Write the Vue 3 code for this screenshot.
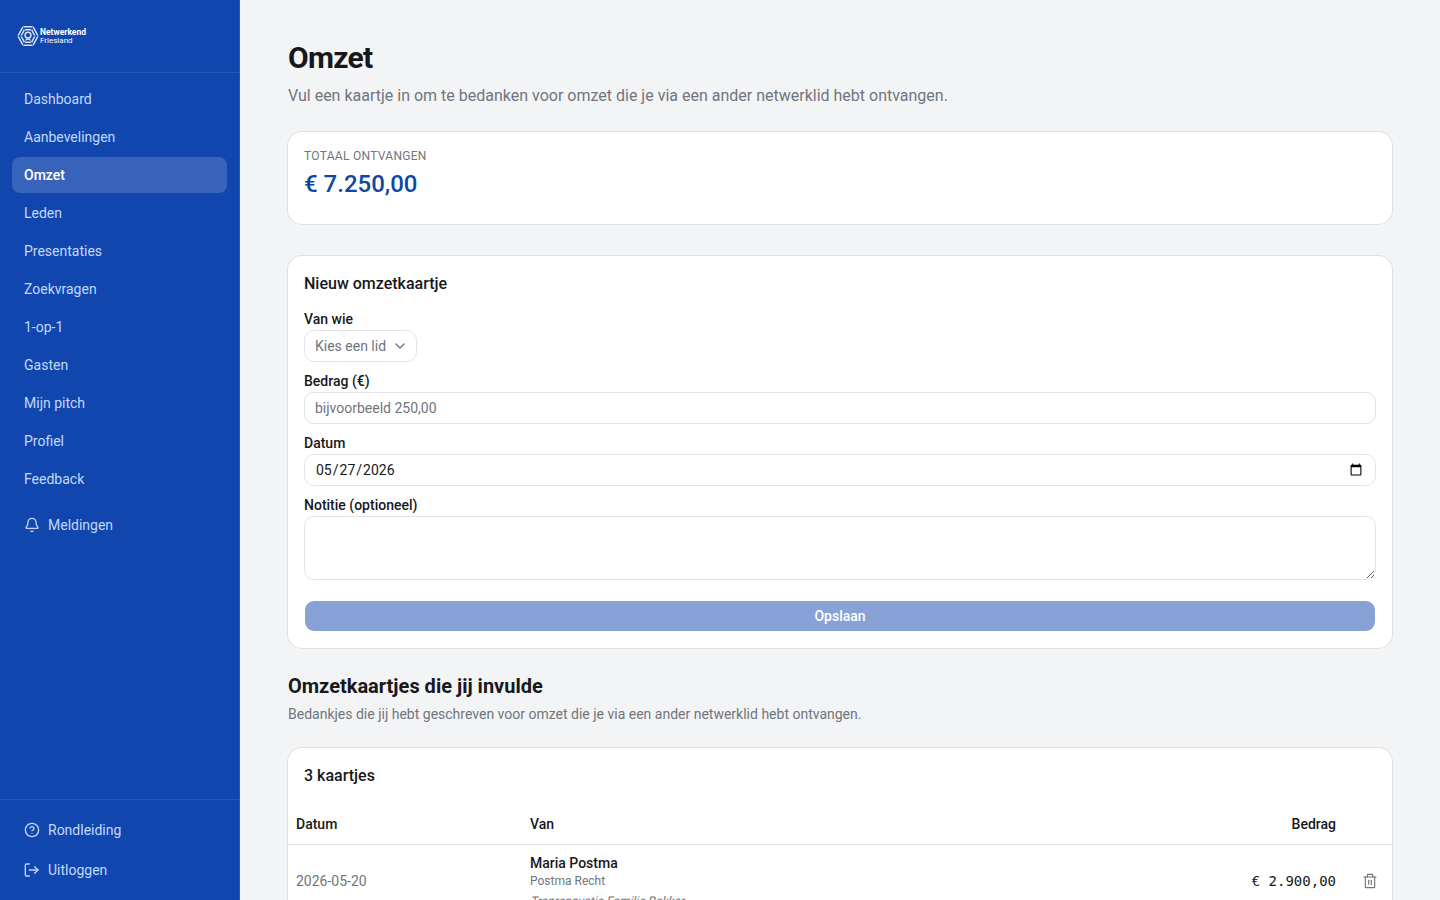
<template>
  <div class="layout">
    <aside class="sidebar">
      <div class="brand">
        <svg class="brand-mark" viewBox="0 0 22 22" fill="none" stroke="currentColor">
          <path d="M6 1.8h10l5 9.2-5 9.2H6L1 11z" stroke-width="1.5" />
          <path d="M7.4 4.8h7.2l3.3 6.2-3.3 6.2H7.4L4.1 11z" stroke-width="1.4" />
          <path class="brand-gap" d="M5.4.8l2.5 4.6M16.6.8l-2.5 4.6M22 11h-5M16.6 21.2l-2.5-4.6M5.4 21.2l2.5-4.6M0 11h5" />
          <circle cx="11" cy="10.2" r="2.9" stroke-width="1.5" />
          <path d="M8.4 15.4c1.5-1.7 3.7-1.7 5.2 0" stroke-width="1.4" />
        </svg>
        <div class="brand-name">
          <strong>Netwerkend</strong>
          <span>Friesland</span>
        </div>
      </div>

      <nav class="nav">
        <a
          v-for="item in navItems"
          :key="item"
          class="nav-item"
          :class="{ active: item === current }"
          @click="current = item"
        >{{ item }}</a>
        <a class="nav-item with-icon notifications">
          <svg class="icon" viewBox="0 0 24 24">
            <path d="M10.268 21a2 2 0 0 0 3.464 0" />
            <path d="M3.262 15.326A1 1 0 0 0 4 17h16a1 1 0 0 0 .74-1.673C19.41 13.956 18 12.499 18 8A6 6 0 0 0 6 8c0 4.499-1.411 5.956-2.738 7.326" />
          </svg>
          Meldingen
        </a>
      </nav>

      <div class="sidebar-footer">
        <a class="nav-item with-icon">
          <svg class="icon" viewBox="0 0 24 24">
            <circle cx="12" cy="12" r="10" />
            <path d="M9.09 9a3 3 0 0 1 5.83 1c0 2-3 3-3 3" />
            <path d="M12 17h.01" />
          </svg>
          Rondleiding
        </a>
        <a class="nav-item with-icon">
          <svg class="icon" viewBox="0 0 24 24">
            <path d="M8 3H4a2 2 0 0 0-2 2v14a2 2 0 0 0 2 2h4" />
            <path d="M8 12h13" />
            <path d="m16 7 5 5-5 5" />
          </svg>
          Uitloggen
        </a>
      </div>
    </aside>

    <main class="content">
      <header class="page-header">
        <h1>Omzet</h1>
        <p>Vul een kaartje in om te bedanken voor omzet die je via een ander netwerklid hebt ontvangen.</p>
      </header>

      <section class="card total">
        <div class="total-label">Totaal ontvangen</div>
        <div class="total-value">€ 7.250,00</div>
      </section>

      <section class="card form-card">
        <h3>Nieuw omzetkaartje</h3>
        <form class="form" @submit.prevent>
          <div class="field">
            <label>Van wie</label>
            <button type="button" class="select">
              <span>Kies een lid</span>
              <svg class="icon" viewBox="0 0 24 24"><path d="m6 9 6 6 6-6" /></svg>
            </button>
          </div>
          <div class="field">
            <label for="amount">Bedrag (€)</label>
            <input id="amount" v-model="form.amount" class="input" type="text" placeholder="bijvoorbeeld 250,00" />
          </div>
          <div class="field">
            <label for="date">Datum</label>
            <input id="date" v-model="form.date" class="input" type="date" />
          </div>
          <div class="field">
            <label for="note">Notitie (optioneel)</label>
            <textarea id="note" v-model="form.note" class="input textarea"></textarea>
          </div>
          <button class="submit" type="submit" :disabled="!form.amount">Opslaan</button>
        </form>
      </section>

      <header class="section-header">
        <h2>Omzetkaartjes die jij invulde</h2>
        <p>Bedankjes die jij hebt geschreven voor omzet die je via een ander netwerklid hebt ontvangen.</p>
      </header>

      <section class="card table-card">
        <h3>3 kaartjes</h3>
        <table>
          <thead>
            <tr>
              <th class="col-date">Datum</th>
              <th>Van</th>
              <th class="col-amount">Bedrag</th>
              <th class="col-action"></th>
            </tr>
          </thead>
          <tbody>
            <tr v-for="row in rows" :key="row.date">
              <td class="date">{{ row.date }}</td>
              <td>
                <div class="person">{{ row.name }}</div>
                <div class="company">{{ row.company }}</div>
                <div class="note">{{ row.note }}</div>
              </td>
              <td class="amount">{{ row.amount }}</td>
              <td class="action">
                <svg class="icon" viewBox="0 0 24 24">
                  <path d="M3 6h18" />
                  <path d="M5 6v15a1 1 0 0 0 1 1h12a1 1 0 0 0 1-1V6" />
                  <path d="M8 6V3a1 1 0 0 1 1-1h6a1 1 0 0 1 1 1v3" />
                  <path d="M10 11v6" />
                  <path d="M14 11v6" />
                </svg>
              </td>
            </tr>
          </tbody>
        </table>
      </section>
    </main>
  </div>
</template>

<script setup>
import { reactive, ref } from "vue";

const navItems = [
  "Dashboard",
  "Aanbevelingen",
  "Omzet",
  "Leden",
  "Presentaties",
  "Zoekvragen",
  "1-op-1",
  "Gasten",
  "Mijn pitch",
  "Profiel",
  "Feedback",
];
const current = ref("Omzet");

const form = reactive({
  amount: "",
  date: "2026-05-27",
  note: "",
});

const rows = [
  {
    date: "2026-05-20",
    name: "Maria Postma",
    company: "Postma Recht",
    note: "Traprenovatie Familie Bakker",
    amount: "€ 2.900,00",
  },
];
</script>

<style>
body {
  margin: 0;
  overflow: hidden;
}
</style>

<style scoped>
.layout {
  display: flex;
  height: 100vh;
  overflow: hidden;
  background: #f3f4f6;
  color: #18181b;
  font-family: Roboto, "Liberation Sans", sans-serif;
  font-size: 14px;
  line-height: 20px;
}

h1,
h2,
h3,
p {
  margin: 0;
}

.icon {
  width: 16px;
  height: 16px;
  flex: none;
  fill: none;
  stroke: currentColor;
  stroke-width: 2;
  stroke-linecap: round;
  stroke-linejoin: round;
}

/* Sidebar */
.sidebar {
  display: flex;
  flex-direction: column;
  flex: none;
  box-sizing: border-box;
  width: 240px;
  background: #1146af;
  border-right: 1px solid #2a59b8;
  color: #c3d9fb;
}

.brand {
  display: flex;
  align-items: center;
  gap: 1px;
  height: 72px;
  padding-left: 17px;
  border-bottom: 1px solid #2458bd;
  color: #fff;
}

.brand-mark {
  width: 22px;
  height: 22px;
  opacity: 0.85;
}

.brand-gap {
  stroke: #1146af;
  stroke-width: 0.8;
}

.brand-name {
  display: flex;
  flex-direction: column;
  padding-top: 1px;
  font-size: 8.5px;
  line-height: 7.5px;
}

.brand-name span {
  font-size: 8px;
}

.nav {
  display: flex;
  flex-direction: column;
  flex: 1;
  gap: 2px;
  padding: 8px 12px;
}

.nav-item {
  display: flex;
  align-items: center;
  box-sizing: border-box;
  height: 36px;
  padding: 0 12px;
  border-radius: 8px;
  cursor: pointer;
}

.nav-item.active {
  background: #3863bb;
  color: #fff;
  font-weight: 500;
}

.with-icon {
  gap: 8px;
}

.notifications {
  margin-top: 8px;
}

.sidebar-footer {
  display: flex;
  flex-direction: column;
  gap: 4px;
  padding: 12px;
  border-top: 1px solid #2458bd;
}

/* Page */
.content {
  flex: 1;
  min-width: 0;
  padding: 40px 48px 0;
}

.page-header h1 {
  font-size: 30px;
  font-weight: 700;
  line-height: 36px;
  letter-spacing: -0.75px;
}

.page-header p {
  margin-top: 8px;
  color: #71757d;
  font-size: 16px;
  line-height: 24px;
}

.card {
  border-radius: 14px;
  background: #fff;
  box-shadow: 0 0 0 1px #e0e1e4;
}

.card h3 {
  font-size: 16px;
  font-weight: 500;
  line-height: 24px;
}

.total {
  box-sizing: border-box;
  height: 92px;
  margin-top: 24px;
  padding: 16px;
}

.total-label {
  color: #71757d;
  font-size: 12px;
  line-height: 16px;
  letter-spacing: 0.3px;
  text-transform: uppercase;
}

.total-value {
  margin-top: 4px;
  color: #1146a4;
  font-size: 24px;
  font-weight: 500;
  line-height: 32px;
}

/* Form */
.form-card {
  box-sizing: border-box;
  height: 392px;
  margin-top: 32px;
  padding: 16px;
}

.form {
  display: flex;
  flex-direction: column;
  gap: 12px;
  margin-top: 16px;
}

.field {
  display: flex;
  flex-direction: column;
  align-items: flex-start;
  gap: 4px;
}

.field label {
  font-weight: 500;
  line-height: 14px;
}

.input,
.select {
  box-sizing: border-box;
  height: 32px;
  padding: 4px 10px;
  border: 1px solid #e4e4e7;
  border-radius: 10px;
  outline: none;
  background: transparent;
  color: #18181b;
  font: inherit;
}

.input {
  width: 100%;
}

.input::placeholder,
.select {
  color: #71757d;
}

.select {
  display: flex;
  align-items: center;
  gap: 6px;
  padding-right: 8px;
}

.textarea {
  display: block;
  height: 64px;
  resize: vertical;
}

.submit {
  height: 30px;
  margin: 9px 1px 0;
  padding: 0;
  border: 0;
  border-radius: 9px;
  background: #88a2d7;
  color: #fff;
  font: inherit;
  font-weight: 500;
}

/* Table */
.section-header {
  margin-top: 24px;
}

.section-header h2 {
  font-size: 20px;
  font-weight: 700;
  line-height: 28px;
}

.section-header p {
  margin-top: 4px;
  color: #71757d;
}

.table-card {
  margin-top: 24px;
  padding-top: 16px;
}

.table-card h3 {
  padding: 0 16px;
}

table {
  width: 100%;
  margin-top: 16px;
  border-collapse: collapse;
  table-layout: fixed;
}

th {
  height: 40px;
  padding: 0 8px;
  border-bottom: 1px solid #e4e4e7;
  font-weight: 500;
  text-align: left;
}

td {
  padding: 8px;
}

.col-date {
  width: 218px;
}

.col-amount {
  width: 200px;
}

.col-amount,
.amount {
  text-align: right;
}

.col-action {
  width: 32px;
}

.date {
  color: #71757d;
}

.person {
  font-weight: 500;
}

.company,
.note {
  color: #71757d;
  font-size: 12px;
  line-height: 16px;
}

/* slanted upright glyphs, wider than the real italic */
.note {
  margin-top: 4px;
  transform: skewX(-14deg);
  transform-origin: 0 75%;
}

.amount {
  font-family: "DejaVu Sans Mono", monospace;
}

.action {
  color: #71757d;
  text-align: right;
}

.action .icon {
  display: block;
  margin: 0 6px 0 auto;
  stroke-width: 1.75;
}
</style>
